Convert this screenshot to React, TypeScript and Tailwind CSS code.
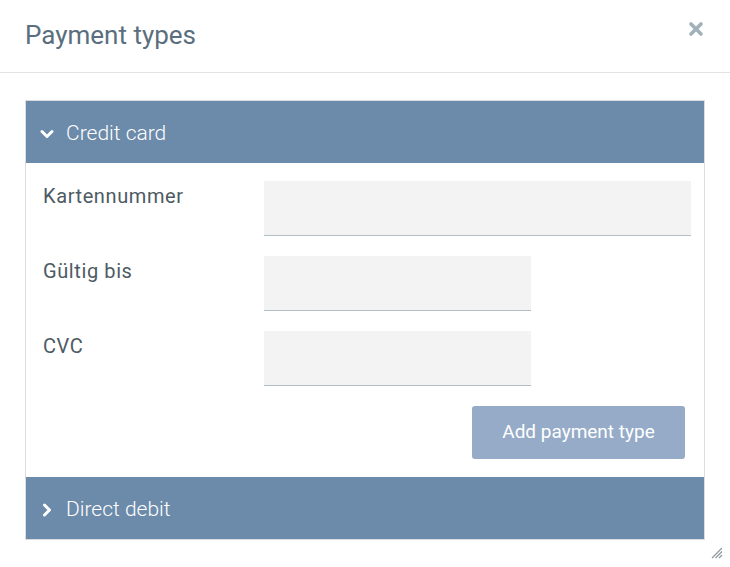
import React from "react";

function ChevronDown() {
  return (
    <svg width="14" height="14" viewBox="0 0 14 14">
      <path d="M2 4.5 L7 9.5 L12 4.5" fill="none" stroke="white" strokeWidth="3" strokeLinecap="round" strokeLinejoin="round" />
    </svg>
  );
}
function ChevronRight() {
  return (
    <svg width="14" height="14" viewBox="0 0 14 14">
      <path d="M4.5 2 L9.5 7 L4.5 12" fill="none" stroke="white" strokeWidth="3" strokeLinecap="round" strokeLinejoin="round" />
    </svg>
  );
}

export default function App() {
  const font = { fontFamily: "Roboto, 'Liberation Sans', sans-serif" };
  const label = "w-[221px] text-[20px] tracking-[0.6px] font-normal text-[#4d5a63] pt-[2px] leading-[26px]";
  return (
    <div className="w-[730px] h-[567px] bg-white relative" style={font}>
      <div className="h-[73px] border-b border-[#e3e3e3] flex items-center justify-between pl-[25px] pr-[26px]">
        <h1 className="text-[26px] text-[#5a6e7e] font-normal mt-[-1px]">Payment types</h1>
        <svg width="16" height="16" viewBox="0 0 16 16" className="mt-[-15px]">
          <path d="M3 3 L13 13 M13 3 L3 13" stroke="#a2b0ba" strokeWidth="3.6" strokeLinecap="round" />
        </svg>
      </div>
      <div className="px-[25px] pt-[27px]">
        <div className="border border-[#dcdcdc]">
          <div className="h-[62px] bg-[#6c8aa9] flex items-center pl-[14px] pt-[3px] text-white">
            <ChevronDown />
            <span className="ml-[12px] text-[21px] font-light">Credit card</span>
          </div>
          <div className="pl-[17px] pr-[13px] pt-[18px] pb-[18px]">
            <div className="flex">
              <div className={label}>Kartennummer</div>
              <div className="flex-1 h-[55px] bg-[#f3f3f3] border-b border-[#b2bec6]" />
            </div>
            <div className="flex mt-[20px]">
              <div className={label}>Gültig bis</div>
              <div className="w-[267px] h-[55px] bg-[#f3f3f3] border-b border-[#b2bec6]" />
            </div>
            <div className="flex mt-[20px]">
              <div className={label}>CVC</div>
              <div className="w-[267px] h-[55px] bg-[#f3f3f3] border-b border-[#b2bec6]" />
            </div>
            <div className="flex justify-end mt-[20px] pr-[6px]">
              <button className="w-[213px] h-[53px] bg-[#95abc7] rounded-[3px] text-white text-[19px]">Add payment type</button>
            </div>
          </div>
          <div className="h-[62px] bg-[#6c8aa9] flex items-center pl-[14px] pt-[3px] text-white">
            <ChevronRight />
            <span className="ml-[12px] text-[21px] font-light">Direct debit</span>
          </div>
        </div>
      </div>
      <svg width="12" height="12" viewBox="0 0 12 12" className="absolute left-[711px] top-[547px]">
        <path d="M11 1 L1 11 M11 4.5 L4.5 11 M11 8 L8 11" stroke="#8f99a2" strokeWidth="1.2" />
      </svg>
    </div>
  );
}
